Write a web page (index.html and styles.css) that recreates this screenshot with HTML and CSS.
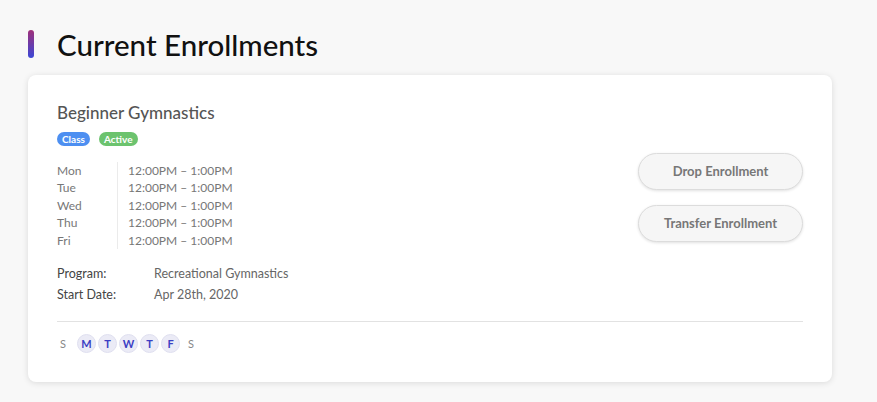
FILE: index.html
```html
<!DOCTYPE html>
<html lang="en">
<head>
    <meta charset="UTF-8">
    <meta name="viewport" content="width=device-width, initial-scale=1.0">
    <title>Current Enrollments</title>
    <link rel="stylesheet" href="styles.css">
</head>
<body>
    <div class="page">
        <h1 class="section-title"><span class="title-bar"></span>Current Enrollments</h1>

        <div class="enroll-card">
            <div class="card-top">
                <div class="card-main">
                    <h2 class="class-name">Beginner Gymnastics</h2>
                    <div class="badges">
                        <span class="badge badge-class">Class</span>
                        <span class="badge badge-active">Active</span>
                    </div>

                    <div class="schedule">
                        <div class="sched-row"><span class="sched-day">Mon</span><span class="sched-time">12:00PM – 1:00PM</span></div>
                        <div class="sched-row"><span class="sched-day">Tue</span><span class="sched-time">12:00PM – 1:00PM</span></div>
                        <div class="sched-row"><span class="sched-day">Wed</span><span class="sched-time">12:00PM – 1:00PM</span></div>
                        <div class="sched-row"><span class="sched-day">Thu</span><span class="sched-time">12:00PM – 1:00PM</span></div>
                        <div class="sched-row"><span class="sched-day">Fri</span><span class="sched-time">12:00PM – 1:00PM</span></div>
                    </div>

                    <div class="details">
                        <div class="detail-row"><span class="detail-label">Program:</span><span class="detail-value">Recreational Gymnastics</span></div>
                        <div class="detail-row"><span class="detail-label">Start Date:</span><span class="detail-value">Apr 28th, 2020</span></div>
                    </div>
                </div>

                <div class="card-actions">
                    <button class="action-btn">Drop Enrollment</button>
                    <button class="action-btn">Transfer Enrollment</button>
                </div>
            </div>

            <div class="week-days">
                <span class="wday">S</span>
                <span class="wday on">M</span>
                <span class="wday on">T</span>
                <span class="wday on">W</span>
                <span class="wday on">T</span>
                <span class="wday on">F</span>
                <span class="wday">S</span>
            </div>
        </div>
    </div>
</body>
</html>
```

FILE: styles.css
```css
* {
    margin: 0;
    padding: 0;
    box-sizing: border-box;
    font-family: Lato, 'Open Sans', sans-serif;
}

body {
    background-color: #f8f8f8;
    color: #555;
}

.page {
    padding: 27px 45px 20px 28px;
}

.section-title {
    display: flex;
    align-items: center;
    gap: 23px;
    font-size: 29.5px;
    font-weight: 500;
    color: #111;
    height: 34px;
    margin-bottom: 14px;
}

.title-bar {
    width: 6px;
    height: 28px;
    border-radius: 3px;
    background: linear-gradient(#a0307a, #3b47d6);
}

.enroll-card {
    background-color: #fff;
    border-radius: 8px;
    box-shadow: 0 1px 6px rgba(0, 0, 0, 0.12);
    padding: 27px 29px 29px 29px;
}

.card-top {
    display: flex;
    justify-content: space-between;
    border-bottom: 1px solid #e2e2e2;
    padding-bottom: 16px;
}

.class-name {
    font-size: 17px;
    font-weight: 500;
    color: #555;
    line-height: 22px;
}

.badges {
    display: flex;
    gap: 9px;
    margin-top: 8px;
}

.badge {
    font-size: 10px;
    font-weight: bold;
    color: #fff;
    padding: 0 5px;
    height: 14px;
    line-height: 14px;
    border-radius: 7px;
}

.badge-class {
    background-color: #4d8ff1;
}

.badge-active {
    background-color: #6cc36e;
}

.schedule {
    margin-top: 16px;
}

.sched-row {
    display: flex;
    font-size: 12px;
    color: #777;
    line-height: 17.4px;
}

.sched-day {
    width: 61px;
    border-right: 1px solid #ebebeb;
}

.sched-time {
    padding-left: 10px;
}

.details {
    margin-top: 14px;
}

.detail-row {
    display: flex;
    font-size: 12.5px;
    line-height: 21px;
}

.detail-label {
    width: 97px;
    color: #444;
}

.detail-value {
    color: #666;
}

.card-actions {
    display: flex;
    flex-direction: column;
    gap: 15px;
    padding-top: 51px;
}

.action-btn {
    width: 165px;
    height: 37px;
    padding-bottom: 2px;
    border-radius: 19px;
    border: 1px solid #dcdcdc;
    background-color: #f6f6f6;
    box-shadow: 0 1px 3px rgba(0, 0, 0, 0.12);
    color: #777;
    font-size: 13px;
    font-weight: bold;
    cursor: pointer;
}

.week-days {
    display: flex;
    align-items: center;
    gap: 2px;
    margin-top: 12px;
}

.wday {
    width: 19px;
    height: 19px;
    line-height: 19px;
    text-align: center;
    font-size: 11px;
    color: #888;
}

.wday:first-child {
    width: 12px;
    margin-right: 6px;
}

.wday:last-child {
    width: 12px;
    margin-left: 3px;
}

.wday.on {
    background-color: #ebebf6;
    border: 1px solid #e0e0f0;
    border-radius: 50%;
    line-height: 17px;
    color: #3b3fc4;
    font-weight: bold;
}
```
